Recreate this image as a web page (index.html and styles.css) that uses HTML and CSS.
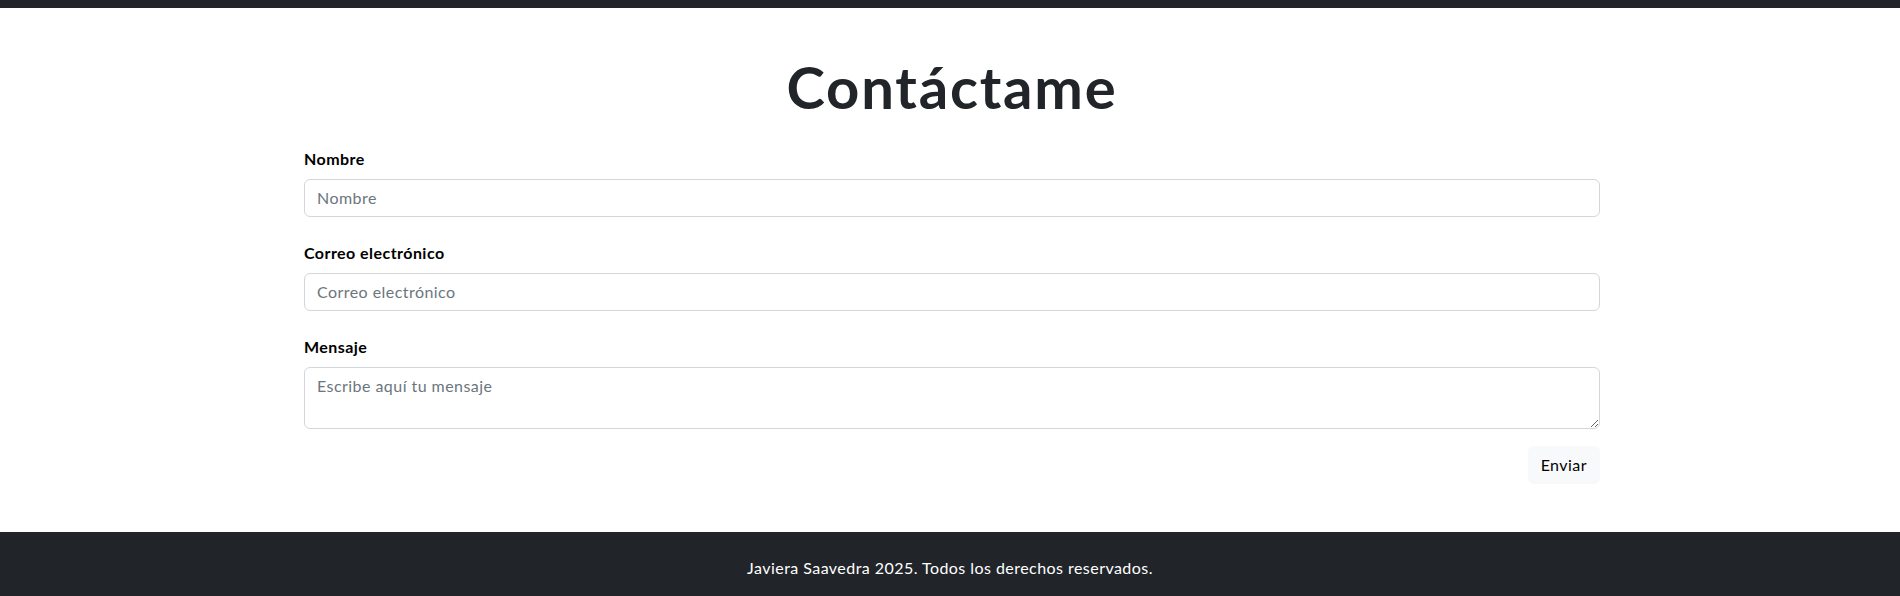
FILE: index.html
```html
<!DOCTYPE html>
<html lang="es">
<head>
<meta charset="utf-8">
<title>Contáctame</title>
<link rel="stylesheet" href="styles.css">
</head>
<body>
<header class="topbar"></header>
<main class="contact">
  <div class="container">
    <h1 class="title">Contáctame</h1>
    <form class="form">
      <div class="field">
        <label class="label" for="nombre">Nombre</label>
        <input class="control" id="nombre" type="text" placeholder="Nombre">
      </div>
      <div class="field">
        <label class="label" for="correo">Correo electrónico</label>
        <input class="control" id="correo" type="email" placeholder="Correo electrónico">
      </div>
      <div class="field">
        <label class="label" for="mensaje">Mensaje</label>
        <textarea class="control area" id="mensaje" rows="2" placeholder="Escribe aquí tu mensaje"></textarea>
      </div>
      <div class="actions">
        <button class="btn" type="submit">Enviar</button>
      </div>
    </form>
  </div>
</main>
<footer class="footer">
  <p class="footer-text">Javiera Saavedra 2025. Todos los derechos reservados.</p>
</footer>
</body>
</html>
```
FILE: styles.css
```css
* { box-sizing: border-box; }
html, body { margin: 0; padding: 0; }
body {
  font-family: "Lato", "Noto Sans", sans-serif;
  font-size: 16px;
  line-height: 1.5;
  letter-spacing: 0.45px;
  color: #212529;
  background: #fff;
}
.topbar {
  height: 8px;
  background: #212529;
}
.contact {
  padding: 44px 0 48px;
}
.container {
  width: 1320px;
  margin: 0 auto;
  padding: 0 10px 0 14px;
}
.title {
  margin: 0 0 25px;
  text-align: center;
  font-size: 58px;
  font-weight: 700;
  line-height: 1.2;
  letter-spacing: 1.8px;
  color: #212529;
}
.form { display: flex; flex-direction: column; }
.field { display: flex; flex-direction: column; margin-bottom: 24px; }
.field:nth-child(3) { margin-bottom: 17px; }
.label {
  font-weight: 700;
  color: #000;
  margin-bottom: 8px;
}
.control {
  display: block;
  width: 100%;
  height: 38px;
  padding: 6px 12px;
  font: inherit;
  letter-spacing: inherit;
  color: #212529;
  background: #fff;
  border: 1px solid #d3d7db;
  border-radius: 6px;
  line-height: 1.5;
}
.control::placeholder { color: #6c757d; }
.area { height: 62px; resize: vertical; }
.actions { display: flex; justify-content: flex-end; }
.btn {
  font: inherit;
  letter-spacing: inherit;
  line-height: 1.5;
  padding: 6px 12px;
  color: #000;
  background: #f8f9fa;
  border: 1px solid #f8f9fa;
  border-radius: 6px;
}
.footer {
  background: #212529;
  padding: 24px 0;
  text-align: center;
}
.footer-text { margin: 0; color: #fff; }
```
